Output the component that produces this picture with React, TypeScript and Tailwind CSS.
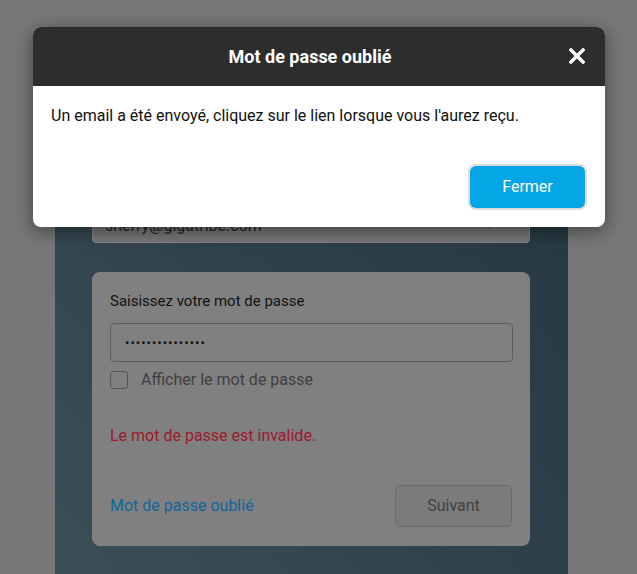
import { ChevronDown } from "lucide-react";

export default function App() {
  return (
    <div className="relative w-full h-[574px] overflow-hidden bg-[#777777] font-['Roboto',sans-serif]">
      {/* page behind the backdrop */}
      <div className="ml-[55px] mt-[40px] w-[513px] h-[620px] bg-gradient-to-tr from-[#3f5059] via-[#2f424c] to-[#243540] px-[37px] pt-[163px]">
        <div className="relative h-[40px] w-[438px] rounded-[4px] border border-[#858585] bg-[#767676] flex items-center pl-[12px] pt-[5px] text-[16px] text-[#222]">
          <span>sherry@gigatribe.com</span>
          <ChevronDown className="absolute right-[28px] top-[10px] text-[#555]" size={22} strokeWidth={1.5} />
        </div>

        <div className="mt-[29px] w-[438px] rounded-[8px] bg-[#808080] px-[18px] pt-[20px] pb-[19px]">
          <p className="text-[15px] leading-[18px] text-[#111]">Saisissez votre mot de passe</p>
          <div className="mt-[13px] h-[39px] w-[403px] rounded-[4px] border border-[#5f5f5f] flex items-center pl-[14px] text-[13px] tracking-[1px] text-[#111]">
            •••••••••••••••
          </div>
          <label className="mt-[9px] flex items-center gap-[13px]">
            <span className="h-[18px] w-[18px] rounded-[3px] border border-[#555]"></span>
            <span className="text-[16px] leading-[18px] text-[#3f3f3f]">Afficher le mot de passe</span>
          </label>
          <p className="mt-[38px] text-[16px] leading-[18px] text-[#9c1a2b]">Le mot de passe est invalide.</p>
          <div className="mt-[40px] flex items-center justify-between">
            <a className="text-[16px] text-[#10669a]">Mot de passe oublié</a>
            <button className="h-[42px] w-[117px] rounded-[6px] border border-[#6a6a6a] bg-[#7b7b7b] text-[16px] text-[#404040]">
              Suivant
            </button>
          </div>
        </div>
      </div>

      {/* modal */}
      <div className="absolute left-[33px] top-[27px] w-[572px] rounded-[8px] overflow-hidden bg-white shadow-[0_4px_18px_rgba(0,0,0,0.45)]">
        <div className="relative h-[59px] bg-[#2d2d2d] flex items-center pl-[20px] pr-[38px]">
          <h2 className="flex-1 text-center text-[18px] font-bold text-white">Mot de passe oublié</h2>
          <button className="absolute right-[20px] top-[21px]">
            <svg width="16" height="16" viewBox="0 0 16 16">
              <path d="M2 2 L14 14 M14 2 L2 14" stroke="white" strokeWidth="3.4" strokeLinecap="square" />
            </svg>
          </button>
        </div>
        <div className="px-[18px] pt-[20px] pb-[19px]">
          <p className="text-[16px] leading-[20px] text-[#111]">
            Un email a été envoyé, cliquez sur le lien lorsque vous l'aurez reçu.
          </p>
          <div className="mt-[40px] flex justify-end pr-[2px]">
            <button className="h-[42px] w-[115px] rounded-[6px] bg-[#05a6e6] text-[16px] text-white ring-2 ring-[#dcdcdc]">
              Fermer
            </button>
          </div>
        </div>
      </div>
    </div>
  );
}
